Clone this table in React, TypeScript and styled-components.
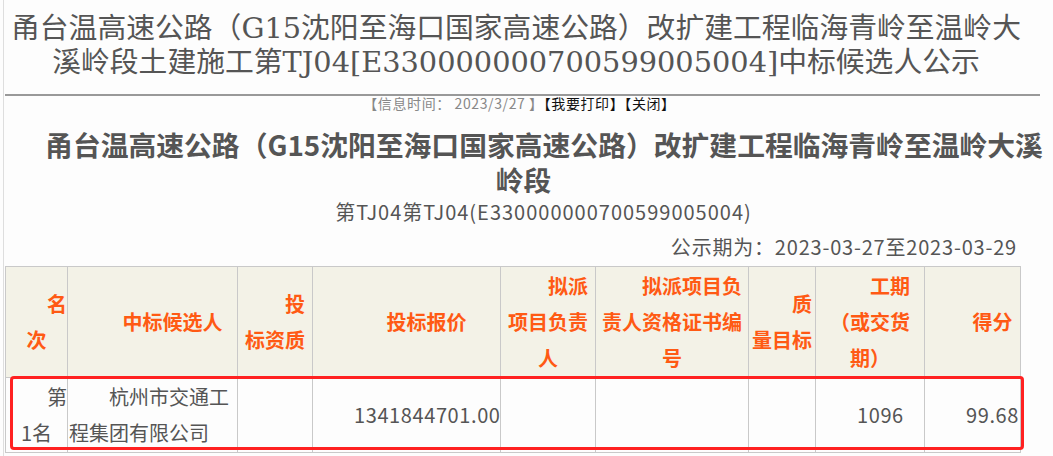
import React from 'react';
import styled, { createGlobalStyle } from 'styled-components';

const GlobalStyle = createGlobalStyle`
  html, body {
    margin: 0;
    padding: 0;
    background: #fdfdfd;
  }
  body {
    font-family: "Microsoft YaHei", "Noto Sans CJK SC", sans-serif;
    color: #555;
  }
`;

const Page = styled.div`
  width: 1053px;
  height: 456px;
  overflow: hidden;
  padding-left: 3px;
  box-sizing: border-box;
`;

const Main = styled.div`
  border-left: 1px solid #dedede;
  min-height: 456px;
`;

const PageTitle = styled.h1`
  margin: 0 0 0 1px;
  width: 1035px;
  box-sizing: border-box;
  padding: 11px 13px 15px 0;
  border-bottom: 2px solid #999;
  text-align: center;
  font-family: "DejaVu Serif", "Noto Sans CJK SC", serif;
  font-weight: normal;
  font-size: 28.8px;
  line-height: 34px;
  color: #555;
  white-space: nowrap;
`;

const InfoBar = styled.div`
  width: 1035px;
  text-align: center;
  font-size: 14px;
  line-height: 14px;
  letter-spacing: 0.6px;
  color: #888;
  padding-right: 4px;
  box-sizing: border-box;
`;

const InfoLink = styled.span`
  color: #111;
`;

const Heading = styled.h2`
  margin: 17px 0 0;
  width: 1039px;
  text-align: center;
  text-indent: 41px;
  font-size: 27.8px;
  line-height: 35px;
  font-weight: bold;
  color: #555;
  white-space: nowrap;
`;

const SubTitle = styled.div`
  width: 1039px;
  text-align: center;
  text-indent: 2em;
  font-size: 20px;
  line-height: 30px;
  letter-spacing: 1px;
  color: #555;
`;

const Section = styled.div`
  margin-left: 1px;
  width: 1016px;
`;

const Period = styled.div`
  margin-top: 5px;
  padding-right: 4px;
  text-align: right;
  font-size: 20px;
  line-height: 30px;
  letter-spacing: 0.8px;
  color: #555;
`;

const TableWrap = styled.div`
  position: relative;
  margin-top: 4px;
`;

const Table = styled.table`
  width: 1016px;
  table-layout: fixed;
  border-collapse: collapse;
  font-size: 20px;
  line-height: 36px;
`;

const HeadCell = styled.th`
  background: #f3f2e7;
  border: 1px solid #c9c9c9;
  padding: 1px;
  color: #ff5a14;
  font-weight: bold;
  text-align: center;
  text-indent: 2em;
  vertical-align: middle;
  word-break: break-all;
`;

const Cell = styled.td<{ $center?: boolean; $num?: boolean }>`
  background: #fdfdfd;
  border: 1px solid #c9c9c9;
  padding: 1px;
  color: #555;
  text-align: ${(p) => (p.$center ? 'center' : 'left')};
  text-indent: 2em;
  vertical-align: middle;
  word-break: break-all;
  white-space: ${(p) => (p.$num ? 'nowrap' : 'normal')};
  letter-spacing: ${(p) => (p.$num ? '0.6px' : '0')};
`;

const Highlight = styled.div`
  position: absolute;
  left: 5px;
  top: 110px;
  width: 1014px;
  height: 74px;
  box-sizing: border-box;
  border: 3px solid #ff2121;
  border-radius: 4px;
  pointer-events: none;
`;

const columns = [
  { title: '名次', width: 62 },
  { title: '中标候选人', width: 170 },
  { title: '投标资质', width: 75 },
  { title: '投标报价', width: 188 },
  { title: '拟派项目负责人', width: 95 },
  { title: '拟派项目负责人资格证书编号', width: 153 },
  { title: '质量目标', width: 67 },
  { title: '工期（或交货期）', width: 109 },
  { title: '得分', width: 96 },
];

const row = ['第1名', '杭州市交通工程集团有限公司', '', '1341844701.00', '', '', '', '1096', '99.68'];

export default function App() {
  return (
    <>
      <GlobalStyle />
      <Page>
        <Main>
          <PageTitle>
            甬台温高速公路（G15沈阳至海口国家高速公路）改扩建工程临海青岭至温岭大
            <br />
            溪岭段土建施工第TJ04[E330000000700599005004]中标候选人公示
          </PageTitle>

          <InfoBar>
            【信息时间： 2023/3/27 】<InfoLink>【我要打印】</InfoLink>
            <InfoLink>【关闭】</InfoLink>
          </InfoBar>

          <Heading>
            甬台温高速公路（G15沈阳至海口国家高速公路）改扩建工程临海青岭至温岭大溪
            <br />
            岭段
          </Heading>
          <SubTitle>第TJ04第TJ04(E330000000700599005004)</SubTitle>

          <Section>
            <Period>公示期为：2023-03-27至2023-03-29</Period>
            <TableWrap>
              <Table>
                <colgroup>
                  {columns.map((c, i) => (
                    <col key={i} style={{ width: c.width }} />
                  ))}
                </colgroup>
                <thead>
                  <tr>
                    {columns.map((c, i) => (
                      <HeadCell key={i}>{c.title}</HeadCell>
                    ))}
                  </tr>
                </thead>
                <tbody>
                  <tr>
                    {row.map((v, i) => (
                      <Cell key={i} $center={i === 0} $num={i >= 3}>
                        {v}
                      </Cell>
                    ))}
                  </tr>
                </tbody>
              </Table>
              <Highlight />
            </TableWrap>
          </Section>
        </Main>
      </Page>
    </>
  );
}
